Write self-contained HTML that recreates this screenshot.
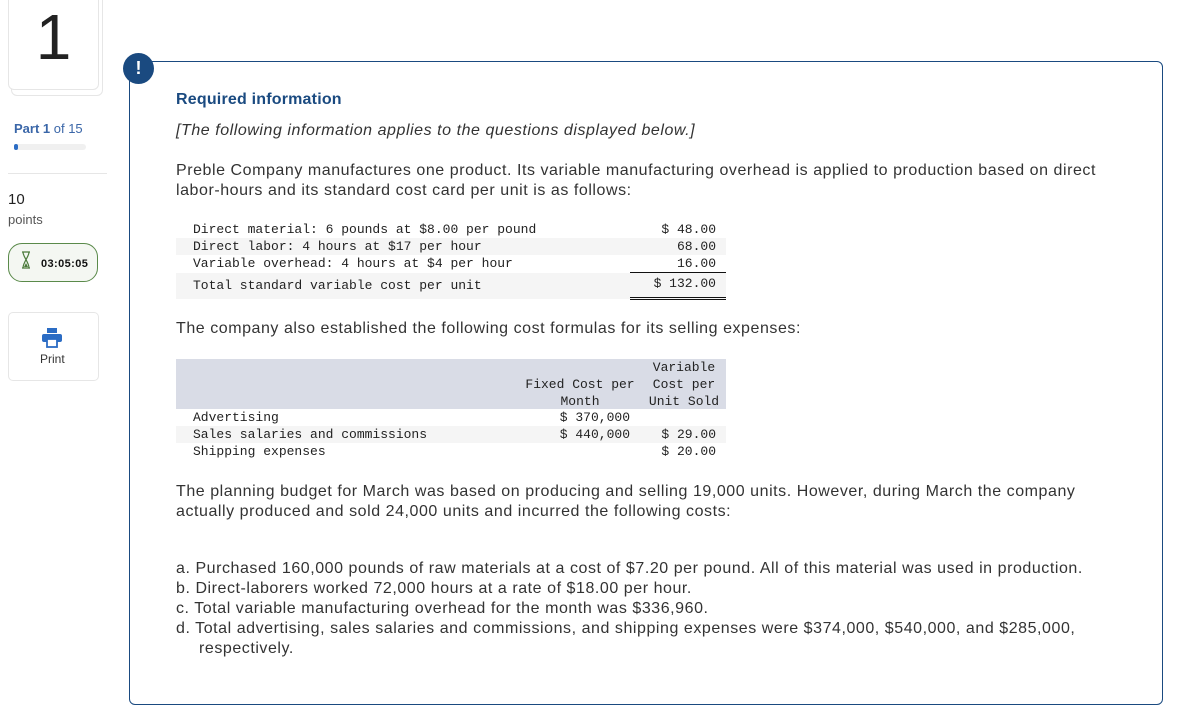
<!DOCTYPE html>
<html><head><style>
body{margin:0;width:1185px;height:715px;background:#fff;font-family:"Liberation Sans",sans-serif;color:#222;position:relative;overflow:hidden}
.abs{position:absolute}
.mono{font-family:"Liberation Mono",monospace;font-size:13px;color:#222}
.row{position:absolute;left:176px;width:550px;height:17px;line-height:17px}
.g{background:#f5f5f5}
.r{position:absolute;text-align:right}
p{margin:0}
.t{letter-spacing:0.55px}
</style></head><body>
<div class="abs" style="left:11px;top:-10px;width:90px;height:104px;border:1px solid #e6e6e6;border-radius:6px"></div>
<div class="abs" style="left:8px;top:-12px;width:89px;height:100px;border:1px solid #e6e6e6;border-radius:6px;background:#fff;text-align:center;font-size:64px;line-height:96px;color:#222">1</div>
<div class="abs" style="left:14px;top:121px;font-size:13px;color:#3a66a8"><b>Part 1</b> of 15</div>
<div class="abs" style="left:14px;top:144px;width:72px;height:6px;background:#f0f0f0;border-radius:3px"><div style="width:4px;height:6px;background:#2b6cc4;border-radius:3px"></div></div>
<div class="abs" style="left:8px;top:173px;width:99px;height:1px;background:#e6e6e6"></div>
<div class="abs" style="left:8px;top:191px;font-size:15px;color:#222">10</div>
<div class="abs" style="left:8px;top:212px;font-size:13px;color:#555">points</div>
<div class="abs" style="left:8px;top:243px;width:88px;height:37px;border:1.5px solid #5a8a4a;border-radius:14px;background:#f4f7f2"></div>
<svg class="abs" style="left:21px;top:251px" width="10" height="18"><path d="M1 1H9M1 17H9M2 1C2 6 8 11 8 17M8 1C8 6 2 11 2 17" stroke="#4a7a3a" stroke-width="1.2" fill="none"/><path d="M3 16L5 12L7 16Z" fill="#4a7a3a"/></svg>
<div class="abs" style="left:41px;top:258px;font-size:11px;font-weight:bold;color:#111;letter-spacing:0.4px">03:05:05</div>
<div class="abs" style="left:8px;top:312px;width:89px;height:67px;border:1px solid #e6e6e6;border-radius:5px"></div>
<svg class="abs" style="left:41px;top:328px" width="22" height="20"><rect x="6" y="0" width="10" height="5" fill="#2b6cc4"/><rect x="1" y="6" width="20" height="8" rx="2" fill="#2b6cc4"/><rect x="6" y="11" width="10" height="8" fill="#fff" stroke="#2b6cc4" stroke-width="1.8"/></svg>
<div class="abs" style="left:40px;top:352px;font-size:12px;color:#333">Print</div>

<div class="abs" style="left:129px;top:61px;width:1032px;height:642px;border:1.3px solid #1a4a80;border-radius:6px"></div>
<div class="abs" style="left:123px;top:53px;width:31px;height:31px;border-radius:50%;background:#1a4a80;color:#fff;text-align:center;font-weight:bold;font-size:18px;line-height:31px">!</div>

<div class="abs t" style="left:176px;top:91px;font-size:16px;font-weight:bold;color:#1a4a80;letter-spacing:0.2px">Required information</div>
<div class="abs t" style="left:176px;top:122px;font-size:16px;font-style:italic;color:#333">[The following information applies to the questions displayed below.]</div>
<div class="abs t" style="left:176px;top:161px;width:950px;font-size:16px;line-height:20px;color:#333">Preble Company manufactures one product. Its variable manufacturing overhead is applied to production based on direct labor-hours and its standard cost card per unit is as follows:</div>

<div class="mono">
<div class="row" style="top:221px"><span style="margin-left:17px">Direct material: 6 pounds at $8.00 per pound</span><span class="r" style="right:10px">$ 48.00</span></div>
<div class="row g" style="top:238px"><span style="margin-left:17px">Direct labor: 4 hours at $17 per hour</span><span class="r" style="right:10px">68.00</span></div>
<div class="row" style="top:255px"><span style="margin-left:17px">Variable overhead: 4 hours at $4 per hour</span><span class="r" style="right:10px">16.00</span></div>
<div class="row g" style="top:273px;height:26px;line-height:26px"><span style="margin-left:17px">Total standard variable cost per unit</span><span class="r" style="right:10px;line-height:22px">$ 132.00</span></div>
<div class="abs" style="left:630px;top:272px;width:96px;height:1.3px;background:#111"></div>
<div class="abs" style="left:630px;top:297px;width:96px;height:1px;background:#111"></div>
<div class="abs" style="left:630px;top:299px;width:96px;height:1px;background:#111"></div>
</div>

<div class="abs t" style="left:176px;top:320px;font-size:16px;color:#333">The company also established the following cost formulas for its selling expenses:</div>

<div class="mono">
<div class="abs" style="left:176px;top:359px;width:550px;height:50px;background:#d9dce6"></div>
<div class="abs" style="left:520px;top:376px;width:120px;text-align:center;line-height:17px">Fixed Cost per<br>Month</div>
<div class="abs" style="left:642px;top:359px;width:84px;text-align:center;line-height:17px">Variable<br>Cost per<br>Unit Sold</div>
<div class="row" style="top:409px"><span style="margin-left:17px">Advertising</span><span class="r" style="right:96px">$ 370,000</span></div>
<div class="row g" style="top:426px"><span style="margin-left:17px">Sales salaries and commissions</span><span class="r" style="right:96px">$ 440,000</span><span class="r" style="right:10px">$ 29.00</span></div>
<div class="row" style="top:443px"><span style="margin-left:17px">Shipping expenses</span><span class="r" style="right:10px">$ 20.00</span></div>
</div>

<div class="abs t" style="left:176px;top:482px;width:950px;font-size:16px;line-height:20px;color:#333">The planning budget for March was based on producing and selling 19,000 units. However, during March the company actually produced and sold 24,000 units and incurred the following costs:</div>
<div class="abs t" style="left:176px;top:559px;width:960px;font-size:16px;line-height:20px;color:#333">
<p>a. Purchased 160,000 pounds of raw materials at a cost of $7.20 per pound. All of this material was used in production.</p>
<p>b. Direct-laborers worked 72,000 hours at a rate of $18.00 per hour.</p>
<p>c. Total variable manufacturing overhead for the month was $336,960.</p>
<p style="padding-left:23px;text-indent:-23px">d. Total advertising, sales salaries and commissions, and shipping expenses were $374,000, $540,000, and $285,000, respectively.</p>
</div>
</body></html>
